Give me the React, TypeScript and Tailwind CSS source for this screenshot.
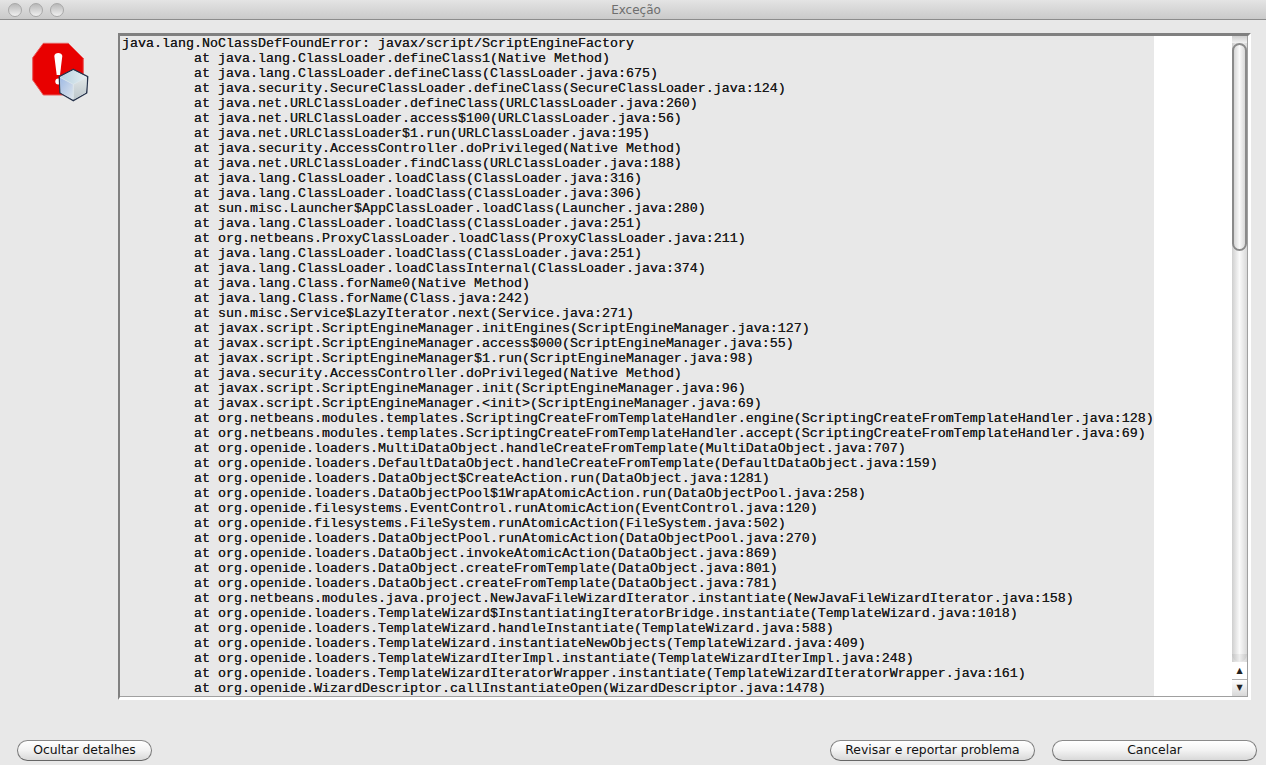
const trace = [
  "java.lang.NoClassDefFoundError: javax/script/ScriptEngineFactory",
  "java.lang.ClassLoader.defineClass1(Native Method)",
  "java.lang.ClassLoader.defineClass(ClassLoader.java:675)",
  "java.security.SecureClassLoader.defineClass(SecureClassLoader.java:124)",
  "java.net.URLClassLoader.defineClass(URLClassLoader.java:260)",
  "java.net.URLClassLoader.access$100(URLClassLoader.java:56)",
  "java.net.URLClassLoader$1.run(URLClassLoader.java:195)",
  "java.security.AccessController.doPrivileged(Native Method)",
  "java.net.URLClassLoader.findClass(URLClassLoader.java:188)",
  "java.lang.ClassLoader.loadClass(ClassLoader.java:316)",
  "java.lang.ClassLoader.loadClass(ClassLoader.java:306)",
  "sun.misc.Launcher$AppClassLoader.loadClass(Launcher.java:280)",
  "java.lang.ClassLoader.loadClass(ClassLoader.java:251)",
  "org.netbeans.ProxyClassLoader.loadClass(ProxyClassLoader.java:211)",
  "java.lang.ClassLoader.loadClass(ClassLoader.java:251)",
  "java.lang.ClassLoader.loadClassInternal(ClassLoader.java:374)",
  "java.lang.Class.forName0(Native Method)",
  "java.lang.Class.forName(Class.java:242)",
  "sun.misc.Service$LazyIterator.next(Service.java:271)",
  "javax.script.ScriptEngineManager.initEngines(ScriptEngineManager.java:127)",
  "javax.script.ScriptEngineManager.access$000(ScriptEngineManager.java:55)",
  "javax.script.ScriptEngineManager$1.run(ScriptEngineManager.java:98)",
  "java.security.AccessController.doPrivileged(Native Method)",
  "javax.script.ScriptEngineManager.init(ScriptEngineManager.java:96)",
  "javax.script.ScriptEngineManager.<init>(ScriptEngineManager.java:69)",
  "org.netbeans.modules.templates.ScriptingCreateFromTemplateHandler.engine(ScriptingCreateFromTemplateHandler.java:128)",
  "org.netbeans.modules.templates.ScriptingCreateFromTemplateHandler.accept(ScriptingCreateFromTemplateHandler.java:69)",
  "org.openide.loaders.MultiDataObject.handleCreateFromTemplate(MultiDataObject.java:707)",
  "org.openide.loaders.DefaultDataObject.handleCreateFromTemplate(DefaultDataObject.java:159)",
  "org.openide.loaders.DataObject$CreateAction.run(DataObject.java:1281)",
  "org.openide.loaders.DataObjectPool$1WrapAtomicAction.run(DataObjectPool.java:258)",
  "org.openide.filesystems.EventControl.runAtomicAction(EventControl.java:120)",
  "org.openide.filesystems.FileSystem.runAtomicAction(FileSystem.java:502)",
  "org.openide.loaders.DataObjectPool.runAtomicAction(DataObjectPool.java:270)",
  "org.openide.loaders.DataObject.invokeAtomicAction(DataObject.java:869)",
  "org.openide.loaders.DataObject.createFromTemplate(DataObject.java:801)",
  "org.openide.loaders.DataObject.createFromTemplate(DataObject.java:781)",
  "org.netbeans.modules.java.project.NewJavaFileWizardIterator.instantiate(NewJavaFileWizardIterator.java:158)",
  "org.openide.loaders.TemplateWizard$InstantiatingIteratorBridge.instantiate(TemplateWizard.java:1018)",
  "org.openide.loaders.TemplateWizard.handleInstantiate(TemplateWizard.java:588)",
  "org.openide.loaders.TemplateWizard.instantiateNewObjects(TemplateWizard.java:409)",
  "org.openide.loaders.TemplateWizardIterImpl.instantiate(TemplateWizardIterImpl.java:248)",
  "org.openide.loaders.TemplateWizardIteratorWrapper.instantiate(TemplateWizardIteratorWrapper.java:161)",
  "org.openide.WizardDescriptor.callInstantiateOpen(WizardDescriptor.java:1478)",
];

function TrafficLight() {
  return <div className="w-[14px] h-[14px] rounded-full border border-[#a8a8a8] bg-gradient-to-b from-[#b8b8b8] to-[#f0f0f0]" />;
}

function AquaButton({ label, className }: { label: string; className: string }) {
  return (
    <button
      className={
        "h-[21px] rounded-full border border-t-[#8a8a8a] border-x-[#777777] border-b-[#666666] bg-gradient-to-b from-[#ffffff] via-[#f2f2f2] to-[#d9d9d9] text-[12.4px] leading-none text-[#111111] " +
        className
      }
    >
      {label}
    </button>
  );
}

function ErrorIcon() {
  return (
    <svg width="60" height="60" viewBox="0 0 60 60">
      <defs>
        <linearGradient id="cubeLeft" x1="0" y1="0" x2="1" y2="1">
          <stop offset="0" stopColor="#9fbae4" />
          <stop offset="1" stopColor="#dde5ec" />
        </linearGradient>
        <linearGradient id="cubeRight" x1="0" y1="0" x2="0" y2="1">
          <stop offset="0" stopColor="#dfe5e6" />
          <stop offset="1" stopColor="#bcc6cb" />
        </linearGradient>
        <linearGradient id="cubeTop" x1="0" y1="0" x2="1" y2="0">
          <stop offset="0" stopColor="#b5d0e0" />
          <stop offset="1" stopColor="#e6eef0" />
        </linearGradient>
      </defs>
      <polygon points="11.3,1.3 36.3,1.3 51.3,16.3 51.3,35 36.3,53 11.3,53 0.7,38 0.7,15.7" fill="#e80000" stroke="#e85a5a" strokeWidth="1" strokeLinejoin="round" />
      <path d="M22.3 14 C 22.5 10, 30 10, 30.3 14 L 28 33 L 24.7 33 Z" fill="#ffffff" />
      <circle cx="26.3" cy="39.5" r="3" fill="#ffffff" />
      <polygon points="41.3,27.3 55.7,34.7 54.7,51 41.3,58.7 28,51 27.3,34.7" fill="#dde6ec" stroke="#26324a" strokeWidth="1.4" strokeLinejoin="round" />
      <polygon points="41.3,28.2 54.8,35 41.3,42 28.2,35" fill="url(#cubeTop)" />
      <polygon points="28,35.8 40.8,42.6 40.8,57.6 28.8,50.6" fill="url(#cubeLeft)" />
      <polygon points="41.8,42.6 54.9,35.8 54,50.6 41.8,57.6" fill="url(#cubeRight)" />
    </svg>
  );
}

function ScrollBar() {
  return (
    <div className="w-[15px] flex flex-col bg-gradient-to-r from-[#cfcfcf] via-[#fafafa] to-[#d8d8d8]">
      <div className="h-[7px] shrink-0 bg-gradient-to-b from-[#cfcfcf] to-[#f2f2f2]" />
      <div className="h-[208px] shrink-0 rounded-full border-2 border-[#8a8a8a] bg-gradient-to-r from-[#d6d6d6] via-[#fafafa] to-[#d8d8d8]" />
      <div className="flex-1" />
      <div className="h-[8px] shrink-0 rounded-b-full bg-gradient-to-r from-[#c4c4c4] via-[#eeeeee] to-[#c8c8c8]" />
      <div className="h-[18px] shrink-0 flex items-center justify-center bg-white text-[8px] leading-none text-[#222222] border-b border-[#b0b0b0]">▲</div>
      <div className="h-[16px] shrink-0 flex items-center justify-center bg-gradient-to-b from-[#ffffff] to-[#d8d8d8] text-[8px] leading-none text-[#222222]">▼</div>
    </div>
  );
}

export default function App() {
  return (
    <div className="w-[1266px] h-[765px] overflow-hidden flex flex-col bg-[#e8e8e8] font-['DejaVu_Sans',sans-serif]">
      {/* Title bar */}
      <div className="h-5 shrink-0 relative flex items-center gap-[7px] pl-2 border-b border-[#8c8c8c] bg-gradient-to-b from-[#e4e4e4] to-[#cacaca]">
        <TrafficLight />
        <TrafficLight />
        <TrafficLight />
        <span className="absolute inset-x-0 pl-[6px] text-center text-[12px] leading-none text-[#6e6e6e]">Exceção</span>
      </div>

      {/* Body */}
      <div className="flex-1 flex items-start pl-[32px] pr-[15px] pt-[13px]">
        <div className="w-[86px] shrink-0 pt-[9px]">
          <ErrorIcon />
        </div>
        <div className="h-[667px] w-[1133px] flex border-t-[3px] border-l-2 border-r-[3px] border-b-[3px] border-t-[#808080] border-l-[#808080] border-r-white border-b-white">
          <div className="flex-1 min-w-0 flex bg-white border-r border-b border-[#a0a0a0] overflow-hidden">
            <pre className="w-[1034px] shrink-0 h-full bg-[#e8e8e8] pl-[2px] font-['Liberation_Mono',monospace] font-normal text-[13.33px] leading-[15px] text-[#1a1a1a] [text-shadow:0_0_0.3px_#333333] overflow-hidden">
              {trace.map((line, i) => (
                <div key={i}>{i === 0 ? line : "         at " + line}</div>
              ))}
            </pre>
            <div className="flex-1" />
            <ScrollBar />
          </div>
        </div>
      </div>

      {/* Footer */}
      <div className="shrink-0 h-[65px] flex items-start pl-[17px] pr-[9px] pt-[40px]">
        <AquaButton label="Ocultar detalhes" className="w-[135px]" />
        <AquaButton label="Revisar e reportar problema" className="w-[205px] ml-auto" />
        <AquaButton label="Cancelar" className="w-[205px] ml-[17px]" />
      </div>
    </div>
  );
}
